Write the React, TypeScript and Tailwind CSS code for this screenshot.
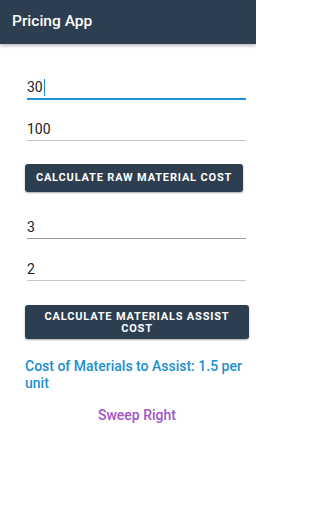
export default function App() {
  return (
    <div className="w-[256px] h-[512px] bg-white font-['Roboto',sans-serif] overflow-hidden">
      <div className="h-[44px] bg-[#2c3e50] flex items-center px-3 shadow-[0_2px_3px_rgba(0,0,0,0.25)]">
        <span className="text-white text-[15.5px] font-medium leading-none">Pricing App</span>
      </div>

      <div className="pl-[25px] pr-[7px] flex flex-col">
        <div className="mt-[33px] ml-[2px] mr-[3px] border-b-2 border-[#1e8fd6] pb-[1px] text-[14px] leading-[20px] text-[#212121] flex items-center">
          30<span className="w-[1.5px] h-[17px] bg-[#1e8fd6] ml-[1px]" />
        </div>
        <div className="mt-[19px] ml-[2px] mr-[3px] border-b border-[#c2c2c2] pb-[1px] text-[14px] leading-[20px] text-[#212121]">
          100
        </div>

        <button className="mt-[23px] self-start w-[218px] h-[28px] bg-[#2c3e50] text-white rounded-[3px] text-[11px] font-bold tracking-[0.075em] shadow-[0_1px_2px_rgba(0,0,0,0.35)]">
          CALCULATE RAW MATERIAL COST
        </button>

        <div className="mt-[25px] ml-[2px] mr-[3px] border-b border-[#9e9e9e] pb-[1px] text-[14px] leading-[20px] text-[#212121]">
          3
        </div>
        <div className="mt-[20px] ml-[2px] mr-[3px] border-b border-[#c8c8c8] pb-[1px] text-[14px] leading-[20px] text-[#212121]">
          2
        </div>

        <button className="mt-[24px] w-full pt-[6px] pb-[4px] bg-[#2c3e50] text-white rounded-[3px] text-[11px] leading-[12px] font-bold tracking-[0.075em] shadow-[0_1px_2px_rgba(0,0,0,0.35)]">
          CALCULATE MATERIALS ASSIST
          <br />
          COST
        </button>

        <p className="mt-[19px] text-[14px] leading-[17px] font-medium text-[#1c8fce]">
          Cost of Materials to Assist: 1.5 per unit
        </p>

        <p className="mt-[13px] text-center text-[14px] leading-[20px] font-medium text-[#a154c9]">
          Sweep Right
        </p>
      </div>
    </div>
  );
}
